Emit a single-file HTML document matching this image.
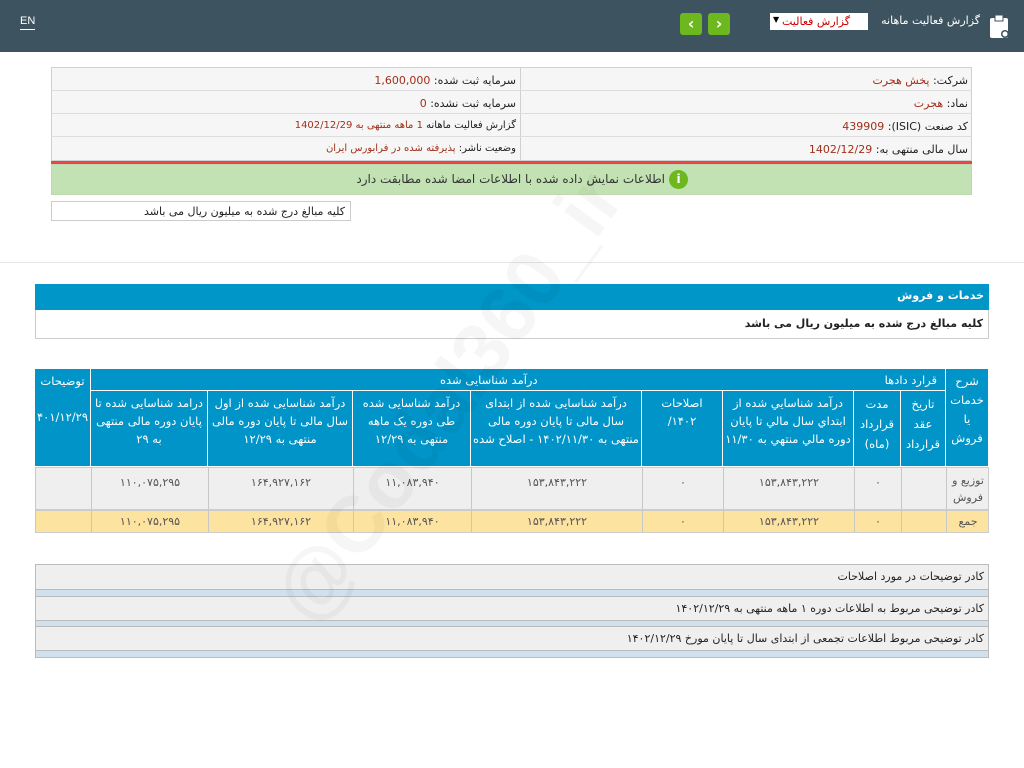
<!DOCTYPE html>
<html><head><meta charset="utf-8">
<style>
*{margin:0;padding:0;box-sizing:border-box}
body{width:1024px;height:768px;background:#fff;font-family:"DejaVu Sans","Liberation Sans",sans-serif;font-size:11px;color:#222;position:relative;overflow:hidden}
.a{position:absolute}
.r{direction:rtl;text-align:right}
.red{color:#a0301a}
.th{position:absolute;background:#0094c8;color:#fff;border-right:1px solid #fff;border-bottom:1px solid #fff;direction:rtl;text-align:center;font-size:11.5px;line-height:18px;overflow:hidden;padding:3px 2px}
.td{position:absolute;border-left:1px solid #c8c8c8;text-align:center;font-size:11px;color:#555}
.c{position:absolute;left:0;right:0;display:flex;align-items:center;justify-content:center}
</style></head><body>
<div class="a" style="left:0;top:0;width:1024px;height:52px;background:#3d5360"></div>
<div class="a" style="left:20px;top:14px;color:#fff;font-size:11px;font-family:'Liberation Sans',sans-serif;border-bottom:1px solid #fff;line-height:15px">EN</div>
<div class="a" style="left:680px;top:13px;width:22px;height:22px;background:#6cb81e;border-radius:3px;color:#fff;text-align:center;line-height:21px;font-size:16px;font-weight:bold">&lsaquo;</div>
<div class="a" style="left:708px;top:13px;width:22px;height:22px;background:#6cb81e;border-radius:3px;color:#fff;text-align:center;line-height:21px;font-size:16px;font-weight:bold">&rsaquo;</div>
<div class="a r" style="left:770px;top:13px;width:98px;height:17px;background:#fff;color:#c00;font-size:11px;line-height:17px;padding-right:18px">گزارش فعالیت</div>
<div class="a" style="left:773px;top:15px;font-size:8px;color:#000">▼</div>
<div class="a r" style="left:870px;top:14px;width:110px;color:#fff;font-size:11px">گزارش فعالیت ماهانه</div>
<svg class="a" style="left:989px;top:14px" width="22" height="26"><rect x="1" y="4" width="18" height="20" rx="2" fill="#fff"/><rect x="6" y="1" width="8" height="6" fill="#fff" stroke="#3d5360"/><circle cx="16" cy="20" r="4" fill="#3d5360"/><circle cx="16" cy="20" r="2.5" fill="#fff"/></svg>

<div class="a" style="left:51px;top:67px;width:921px;height:94px;border:1px solid #d0d0d0;background:#f6f6f6"></div>
<div class="a" style="left:520px;top:67px;width:1px;height:94px;background:#d0d0d0"></div>
<div class="a" style="left:51px;top:90px;width:921px;height:1px;background:#ddd"></div>
<div class="a" style="left:51px;top:113px;width:921px;height:1px;background:#ddd"></div>
<div class="a" style="left:51px;top:136px;width:921px;height:1px;background:#ddd"></div>
<div class="a r" style="left:525px;top:74px;width:443px">شرکت: <span class="red">پخش هجرت</span></div>
<div class="a r" style="left:525px;top:97px;width:443px">نماد: <span class="red">هجرت</span></div>
<div class="a r" style="left:525px;top:120px;width:443px">کد صنعت (ISIC): <span class="red">439909</span></div>
<div class="a r" style="left:525px;top:143px;width:443px">سال مالی منتهی به: <span class="red">1402/12/29</span></div>
<div class="a r" style="left:60px;top:74px;width:456px">سرمایه ثبت شده: <span class="red">1,600,000</span></div>
<div class="a r" style="left:60px;top:97px;width:456px">سرمایه ثبت نشده: <span class="red">0</span></div>
<div class="a r" style="left:60px;top:120px;width:456px;font-size:10px">گزارش فعالیت ماهانه <span class="red">1 ماهه منتهی به 1402/12/29</span></div>
<div class="a r" style="left:60px;top:143px;width:456px;font-size:10px">وضعیت ناشر: <span class="red">پذیرفته شده در فرابورس ایران</span></div>
<div class="a" style="left:51px;top:161px;width:921px;height:3px;background:#e84545"></div>
<div class="a" style="left:51px;top:164px;width:921px;height:31px;background:#c3e2b3;border:1px solid #c0d8b0"></div>
<div class="a r" style="left:200px;top:172px;width:465px;font-size:12px;color:#333">اطلاعات نمایش داده شده با اطلاعات امضا شده مطابقت دارد</div>
<div class="a" style="left:669px;top:170px;width:19px;height:19px;border-radius:50%;background:#6cb81e;color:#fff;text-align:center;font-weight:bold;line-height:19px;font-size:12px">i</div>
<div class="a r" style="left:51px;top:201px;width:300px;height:20px;border:1px solid #ccc;padding:3px 5px;font-size:11px">کلیه مبالغ درج شده به میلیون ریال می باشد</div>
<div class="a" style="left:0;top:262px;width:1024px;height:1px;background:#e6e6e6"></div>

<div class="a r" style="left:35px;top:284px;width:954px;height:26px;background:#0096c8;color:#fff;font-weight:bold;padding:5px 5px;font-size:11px">خدمات و فروش</div>
<div class="a r" style="left:35px;top:310px;width:954px;height:29px;border:1px solid #ccc;border-top:none;font-weight:bold;padding:7px 5px;font-size:11px">کلیه مبالغ درج شده به میلیون ریال می باشد</div>

<div class="th" style="left:946px;top:369px;width:43px;height:98px;line-height:19px">شرح خدمات یا فروش</div>
<div class="th" style="left:91px;top:369px;width:855px;height:22px;padding-top:2px"><span style="float:right;margin-right:6px">قرارد دادها</span>درآمد شناسایی شده</div>
<div class="th" style="left:35px;top:369px;width:56px;height:98px">توضیحات<br><br>۱۴۰۱/۱۲/۲۹</div>
<div class="th" style="left:901px;top:391px;width:45px;height:76px;line-height:20px">تاریخ عقد قرارداد</div>
<div class="th" style="left:854px;top:391px;width:47px;height:76px;line-height:20px">مدت قرارداد (ماه)</div>
<div class="th" style="left:723px;top:391px;width:131px;height:76px">درآمد شناسايي شده از ابتداي سال مالي تا پايان دوره مالي منتهي به ۱۱/۳۰</div>
<div class="th" style="left:642px;top:391px;width:81px;height:76px">اصلاحات<br>۱۴۰۲/</div>
<div class="th" style="left:471px;top:391px;width:171px;height:76px">درآمد شناسایی شده از ابتدای سال مالی تا پایان دوره مالی منتهی به ۱۴۰۲/۱۱/۳۰ - اصلاح شده</div>
<div class="th" style="left:353px;top:391px;width:118px;height:76px">درآمد شناسایی شده طی دوره یک ماهه منتهی به ۱۲/۲۹</div>
<div class="th" style="left:208px;top:391px;width:145px;height:76px">درآمد شناسایی شده از اول سال مالی تا پایان دوره مالی منتهی به ۱۲/۲۹</div>
<div class="th" style="left:91px;top:391px;width:117px;height:76px">درامد شناسایی شده تا پایان دوره مالی منتهی به ۲۹</div>

<div class="a" style="left:35px;top:467px;width:954px;height:43px;background:#efefef;border:1px solid #ccc"></div>
<div class="a" style="left:35px;top:510px;width:954px;height:23px;background:#fde3a0;border:1px solid #ccc"></div>

<div class="td" style="left:946px;top:467px;width:43px;height:66px"><div class="c" style="top:0;height:43px;line-height:17px;text-align:center">توزیع و<br>فروش</div><div class="c" style="top:43px;height:23px">جمع</div></div>
<div class="td" style="left:901px;top:467px;width:45px;height:66px"></div>
<div class="td" style="left:854px;top:467px;width:47px;height:66px"><div class="c" style="top:0;height:30px">۰</div><div class="c" style="top:43px;height:23px">۰</div></div>
<div class="td" style="left:723px;top:467px;width:131px;height:66px"><div class="c" style="top:0;height:30px">۱۵۳,۸۴۳,۲۲۲</div><div class="c" style="top:43px;height:23px">۱۵۳,۸۴۳,۲۲۲</div></div>
<div class="td" style="left:642px;top:467px;width:81px;height:66px"><div class="c" style="top:0;height:30px">۰</div><div class="c" style="top:43px;height:23px">۰</div></div>
<div class="td" style="left:471px;top:467px;width:171px;height:66px"><div class="c" style="top:0;height:30px">۱۵۳,۸۴۳,۲۲۲</div><div class="c" style="top:43px;height:23px">۱۵۳,۸۴۳,۲۲۲</div></div>
<div class="td" style="left:353px;top:467px;width:118px;height:66px"><div class="c" style="top:0;height:30px">۱۱,۰۸۳,۹۴۰</div><div class="c" style="top:43px;height:23px">۱۱,۰۸۳,۹۴۰</div></div>
<div class="td" style="left:208px;top:467px;width:145px;height:66px"><div class="c" style="top:0;height:30px">۱۶۴,۹۲۷,۱۶۲</div><div class="c" style="top:43px;height:23px">۱۶۴,۹۲۷,۱۶۲</div></div>
<div class="td" style="left:91px;top:467px;width:117px;height:66px"><div class="c" style="top:0;height:30px">۱۱۰,۰۷۵,۲۹۵</div><div class="c" style="top:43px;height:23px">۱۱۰,۰۷۵,۲۹۵</div></div>
<div class="td" style="left:35px;top:467px;width:56px;height:66px"></div>

<div class="a" style="left:35px;top:564px;width:954px;height:94px;border:1px solid #bbb;background:#cfe0ef"></div>
<div class="a r" style="left:36px;top:565px;width:952px;height:25px;background:#efefef;border-bottom:1px solid #bbb;padding:5px 4px">کادر توضیحات در مورد اصلاحات</div>
<div class="a r" style="left:36px;top:596px;width:952px;height:1px;background:#bbb"></div>
<div class="a r" style="left:36px;top:597px;width:952px;height:24px;background:#efefef;border-bottom:1px solid #bbb;padding:5px 4px">کادر توضیحی مربوط به اطلاعات دوره ۱ ماهه منتهی به ۱۴۰۲/۱۲/۲۹</div>
<div class="a r" style="left:36px;top:626px;width:952px;height:1px;background:#bbb"></div>
<div class="a r" style="left:36px;top:627px;width:952px;height:24px;background:#efefef;border-bottom:1px solid #bbb;padding:5px 4px">کادر توضیحی مربوط اطلاعات تجمعی از ابتدای سال تا پایان مورخ ۱۴۰۲/۱۲/۲۹</div>

<div class="a" style="left:255px;top:585px;font-size:80px;font-weight:bold;color:rgba(0,0,0,0.035);transform:rotate(-54deg);transform-origin:left top;white-space:nowrap;font-family:'Liberation Sans',sans-serif">@Codal360_ir</div>
</body></html>
